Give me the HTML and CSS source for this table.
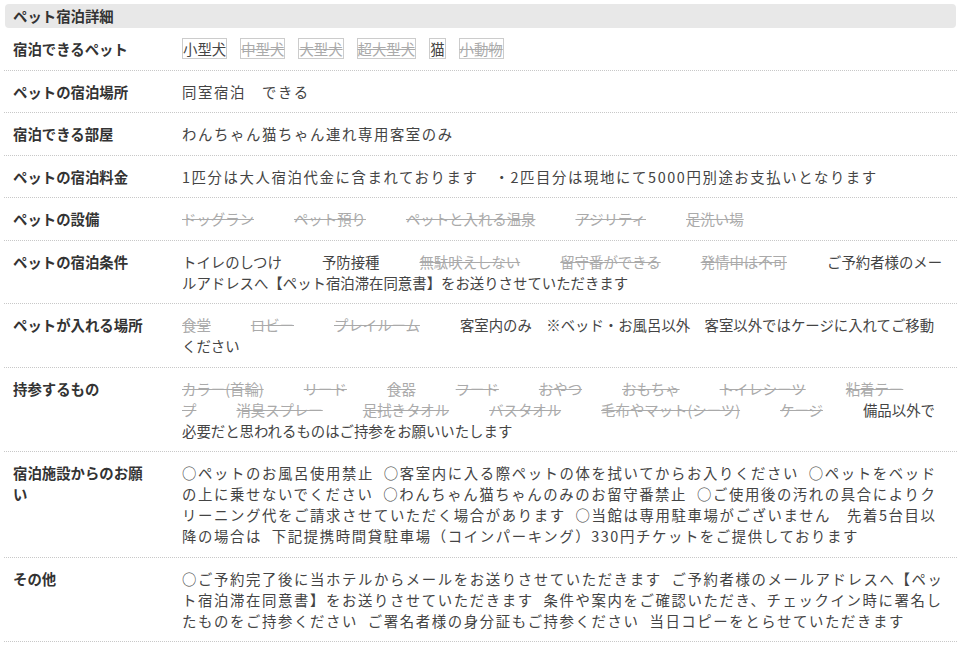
FILE: index.html
```html
<!DOCTYPE html>
<html lang="ja">
<head>
  <meta charset="UTF-8">
  <title>ペット宿泊詳細</title>
  <link rel="stylesheet" href="styles.css">
</head>
<body>
  <div class="pet-detail">
    <h2 class="pet-title">ペット宿泊詳細</h2>

    <div class="row">
      <div class="label">宿泊できるペット</div>
      <div class="value">
        <span class="tag">小型犬</span><span class="tag off">中型犬</span><span class="tag off">大型犬</span><span class="tag off">超大型犬</span><span class="tag">猫</span><span class="tag off">小動物</span>
      </div>
    </div>

    <div class="row">
      <div class="label">ペットの宿泊場所</div>
      <div class="value spaced">同室宿泊　できる</div>
    </div>

    <div class="row">
      <div class="label">宿泊できる部屋</div>
      <div class="value spaced">わんちゃん猫ちゃん連れ専用客室のみ</div>
    </div>

    <div class="row">
      <div class="label">ペットの宿泊料金</div>
      <div class="value spaced">1匹分は大人宿泊代金に含まれております　・2匹目分は現地にて5000円別途お支払いとなります</div>
    </div>

    <div class="row">
      <div class="label">ペットの設備</div>
      <div class="value">
        <span class="item off">ドッグラン</span><span class="item off">ペット預り</span><span class="item off">ペットと入れる温泉</span><span class="item off">アジリティ</span><span class="item off">足洗い場</span>
      </div>
    </div>

    <div class="row">
      <div class="label">ペットの宿泊条件</div>
      <div class="value">
        <span class="item">トイレのしつけ</span><span class="item">予防接種</span><span class="item off">無駄吠えしない</span><span class="item off">留守番ができる</span><span class="item off">発情中は不可</span><span>ご予約者様のメールアドレスへ【ペット宿泊滞在同意書】をお送りさせていただきます</span>
      </div>
    </div>

    <div class="row">
      <div class="label">ペットが入れる場所</div>
      <div class="value">
        <span class="item off">食堂</span><span class="item off">ロビー</span><span class="item off">プレイルーム</span><span>客室内のみ　※ベッド・お風呂以外　客室以外ではケージに入れてご移動ください</span>
      </div>
    </div>

    <div class="row">
      <div class="label">持参するもの</div>
      <div class="value">
        <span class="item off">カラー(首輪)</span><span class="item off">リード</span><span class="item off">食器</span><span class="item off">フード</span><span class="item off">おやつ</span><span class="item off">おもちゃ</span><span class="item off">トイレシーツ</span><span class="item off">粘着テープ</span><span class="item off">消臭スプレー</span><span class="item off">足拭きタオル</span><span class="item off">バスタオル</span><span class="item off">毛布やマット(シーツ)</span><span class="item off">ケージ</span><span>備品以外で必要だと思われるものはご持参をお願いいたします</span>
      </div>
    </div>

    <div class="row">
      <div class="label">宿泊施設からのお願い</div>
      <div class="value spaced">○ペットのお風呂使用禁止 ○客室内に入る際ペットの体を拭いてからお入りください ○ペットをベッドの上に乗せないでください ○わんちゃん猫ちゃんのみのお留守番禁止 ○ご使用後の汚れの具合によりクリーニング代をご請求させていただく場合があります ○当館は専用駐車場がございません　先着5台目以降の場合は 下記提携時間貸駐車場（コインパーキング）330円チケットをご提供しております</div>
    </div>

    <div class="row">
      <div class="label">その他</div>
      <div class="value spaced">○ご予約完了後に当ホテルからメールをお送りさせていただきます ご予約者様のメールアドレスへ【ペット宿泊滞在同意書】をお送りさせていただきます 条件や案内をご確認いただき、チェックイン時に署名したものをご持参ください ご署名者様の身分証もご持参ください 当日コピーをとらせていただきます</div>
    </div>
  </div>
</body>
</html>
```

FILE: styles.css
```css
body { margin: 0; font-family: "Noto Sans CJK JP", "Noto Sans", sans-serif; color: #333; background: #fff; }
.pet-detail { margin: 4px 19px 0 4px; }
.pet-title { margin: 0 1px; height: 24px; line-height: 24px; padding-left: 8px; background-color: #e8e8e8; border-radius: 4px; font-size: 14.4px; font-weight: bold; color: #333; }
.row { display: grid; grid-template-columns: 135px 765px; column-gap: 34px; padding: 10px 0 10.5px 9px; border-bottom: 1px dotted #c8c8c8; font-size: 14.4px; line-height: 21px; }
.label { font-weight: bold; color: #333; }
.value { color: #444; }
.spaced { letter-spacing: 1.6px; word-spacing: 5px; }
.tag { display: inline-block; line-height: 19px; padding: 0; border: 1px solid #ccc; margin-right: 13px; }
.item { margin-right: 40px; }
.off { color: #aaa; text-decoration: line-through; }
```
